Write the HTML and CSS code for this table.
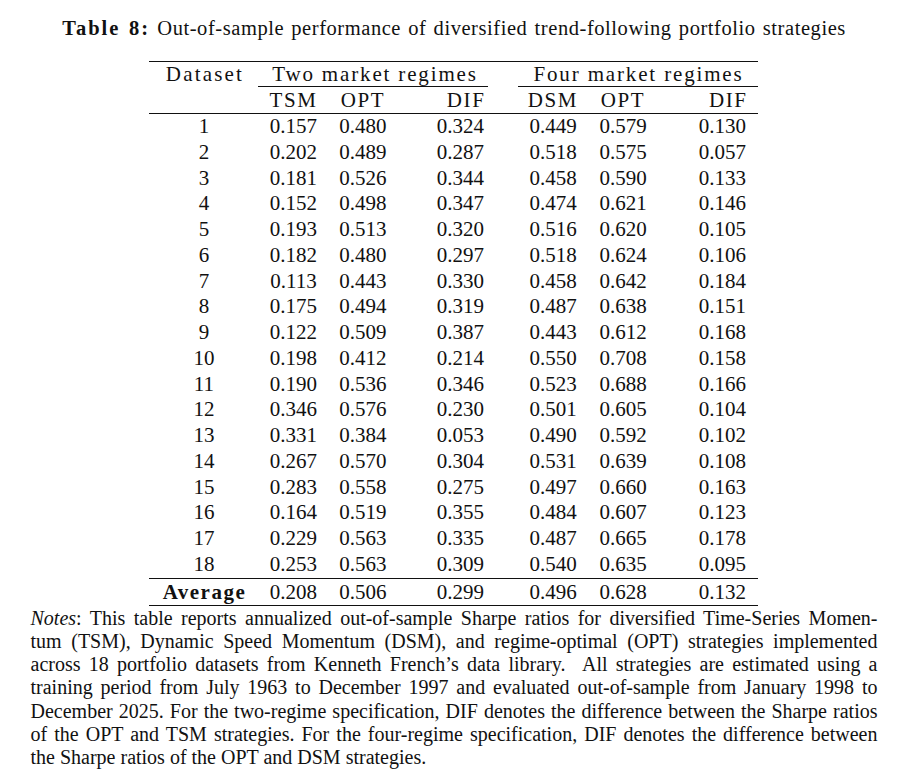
FILE: index.html
```html
<!DOCTYPE html>
<html>
<head>
<meta charset="utf-8">
<link rel="stylesheet" href="styles.css">
</head>
<body>
<div class="page">
  <h1 class="caption"><b>Table 8:</b> Out-of-sample performance of diversified trend-following portfolio strategies</h1>
  <table class="results">
    <colgroup>
      <col class="c-ds"><col class="c-a"><col class="c-b"><col class="c-c"><col class="c-gap"><col class="c-d"><col class="c-e"><col class="c-f">
    </colgroup>
    <thead>
      <tr class="h1">
        <th class="ds">Dataset</th>
        <th colspan="3" class="grp"><div class="grp-in g1">Two market regimes</div></th>
        <th></th>
        <th colspan="3" class="grp"><div class="grp-in g2">Four market regimes</div></th>
      </tr>
      <tr class="h2">
        <th></th><th class="ctr">TSM</th><th class="ctr">OPT</th><th class="rgt">DIF</th><th></th><th class="ctr">DSM</th><th class="ctr">OPT</th><th class="rgt">DIF</th>
      </tr>
    </thead>
    <tbody>
      <tr><td>1</td><td>0.157</td><td>0.480</td><td>0.324</td><td></td><td>0.449</td><td>0.579</td><td>0.130</td></tr>
      <tr><td>2</td><td>0.202</td><td>0.489</td><td>0.287</td><td></td><td>0.518</td><td>0.575</td><td>0.057</td></tr>
      <tr><td>3</td><td>0.181</td><td>0.526</td><td>0.344</td><td></td><td>0.458</td><td>0.590</td><td>0.133</td></tr>
      <tr><td>4</td><td>0.152</td><td>0.498</td><td>0.347</td><td></td><td>0.474</td><td>0.621</td><td>0.146</td></tr>
      <tr><td>5</td><td>0.193</td><td>0.513</td><td>0.320</td><td></td><td>0.516</td><td>0.620</td><td>0.105</td></tr>
      <tr><td>6</td><td>0.182</td><td>0.480</td><td>0.297</td><td></td><td>0.518</td><td>0.624</td><td>0.106</td></tr>
      <tr><td>7</td><td>0.113</td><td>0.443</td><td>0.330</td><td></td><td>0.458</td><td>0.642</td><td>0.184</td></tr>
      <tr><td>8</td><td>0.175</td><td>0.494</td><td>0.319</td><td></td><td>0.487</td><td>0.638</td><td>0.151</td></tr>
      <tr><td>9</td><td>0.122</td><td>0.509</td><td>0.387</td><td></td><td>0.443</td><td>0.612</td><td>0.168</td></tr>
      <tr><td>10</td><td>0.198</td><td>0.412</td><td>0.214</td><td></td><td>0.550</td><td>0.708</td><td>0.158</td></tr>
      <tr><td>11</td><td>0.190</td><td>0.536</td><td>0.346</td><td></td><td>0.523</td><td>0.688</td><td>0.166</td></tr>
      <tr><td>12</td><td>0.346</td><td>0.576</td><td>0.230</td><td></td><td>0.501</td><td>0.605</td><td>0.104</td></tr>
      <tr><td>13</td><td>0.331</td><td>0.384</td><td>0.053</td><td></td><td>0.490</td><td>0.592</td><td>0.102</td></tr>
      <tr><td>14</td><td>0.267</td><td>0.570</td><td>0.304</td><td></td><td>0.531</td><td>0.639</td><td>0.108</td></tr>
      <tr><td>15</td><td>0.283</td><td>0.558</td><td>0.275</td><td></td><td>0.497</td><td>0.660</td><td>0.163</td></tr>
      <tr><td>16</td><td>0.164</td><td>0.519</td><td>0.355</td><td></td><td>0.484</td><td>0.607</td><td>0.123</td></tr>
      <tr><td>17</td><td>0.229</td><td>0.563</td><td>0.335</td><td></td><td>0.487</td><td>0.665</td><td>0.178</td></tr>
      <tr><td>18</td><td>0.253</td><td>0.563</td><td>0.309</td><td></td><td>0.540</td><td>0.635</td><td>0.095</td></tr>
    </tbody>
    <tfoot>
      <tr><td class="avg">Average</td><td>0.208</td><td>0.506</td><td>0.299</td><td></td><td>0.496</td><td>0.628</td><td>0.132</td></tr>
    </tfoot>
  </table>
  <div class="notes">
    <span class="ln"><i>Notes</i>: This table reports annualized out-of-sample Sharpe ratios for diversified Time-Series Momen-</span>
    <span class="ln">tum (TSM), Dynamic Speed Momentum (DSM), and regime-optimal (OPT) strategies implemented</span>
    <span class="ln">across 18 portfolio datasets from Kenneth French’s data library. &nbsp;All strategies are estimated using a</span>
    <span class="ln">training period from July 1963 to December 1997 and evaluated out-of-sample from January 1998 to</span>
    <span class="ln">December 2025. For the two-regime specification, DIF denotes the difference between the Sharpe ratios</span>
    <span class="ln">of the OPT and TSM strategies. For the four-regime specification, DIF denotes the difference between</span>
    <span class="ln last">the Sharpe ratios of the OPT and DSM strategies.</span>
  </div>
</div>
</body>
</html>
```
FILE: styles.css
```css
html, body {
  margin: 0;
  padding: 0;
  background: #ffffff;
}
.page {
  width: 908px;
  height: 782px;
  font-family: "Liberation Serif", "Times New Roman", serif;
  color: #111111;
  display: flex;
  flex-direction: column;
  align-items: center;
}
.caption {
  margin: 0;
  padding-top: 16px;
  height: 61px;
  box-sizing: border-box;
  font-size: 20.5px;
  font-weight: normal;
  line-height: 24px;
  letter-spacing: 0.56px;
  word-spacing: 1.5px;
  white-space: nowrap;
}
.caption b {
  font-weight: bold;
  letter-spacing: 2px;
}
.results {
  border-collapse: collapse;
  border-spacing: 0;
  table-layout: fixed;
  width: 609px;
  margin-left: -1px;
  font-size: 21px;
  border-top: 1.6px solid #111111;
  border-bottom: 1.6px solid #111111;
}
.c-ds { width: 110px; }
.c-a { width: 69px; }
.c-b { width: 70px; }
.c-c { width: 97px; }
.c-gap { width: 23px; }
.c-d { width: 70px; }
.c-e { width: 70px; }
.c-f { width: 100px; }
.results th, .results td {
  padding: 0;
  font-weight: normal;
  text-align: center;
  height: 25.75px;
  line-height: 25.75px;
  white-space: nowrap;
}
.results tr.h1 th {
  height: 25px;
  line-height: 25px;
  padding-top: 0;
  letter-spacing: 1.85px;
}
.results tr.h1 th.ds {
  letter-spacing: 2.2px;
  text-indent: 2px;
}
.grp-in {
  border-bottom: 1px solid #111111;
  line-height: 24px;
  height: 25px;
  box-sizing: border-box;
}
.g1 { margin-left: -1px; margin-right: 7px; text-indent: 4px; }
.g2 { margin-left: 0; margin-right: 0; text-indent: 1px; }
.results tr.h2 th {
  height: 26px;
  line-height: 26px;
  letter-spacing: 1.6px;
  border-bottom: 1px solid #111111;
}
.results td:nth-child(4), .results td:nth-child(8), .results th.rgt {
  text-align: right;
  padding-right: 11px;
}
.results tr.h2 th.rgt {
  padding-right: 9.5px;
}
.results td:nth-child(8) {
  padding-right: 12px;
}
.results tr.h2 th:nth-child(8) {
  padding-right: 10.5px;
}
.results tfoot td {
  border-top: 1px solid #111111;
  height: 26px;
  line-height: 26px;
}
.results td.avg {
  font-weight: bold;
  letter-spacing: 1.5px;
  text-indent: 1px;
}
.notes {
  width: 847px;
  padding-top: 1px;
  font-size: 20px;
  line-height: 23.25px;
}
.ln {
  display: block;
  text-align: justify;
  text-align-last: justify;
}
.ln.last {
  text-align: left;
  text-align-last: left;
}
```
